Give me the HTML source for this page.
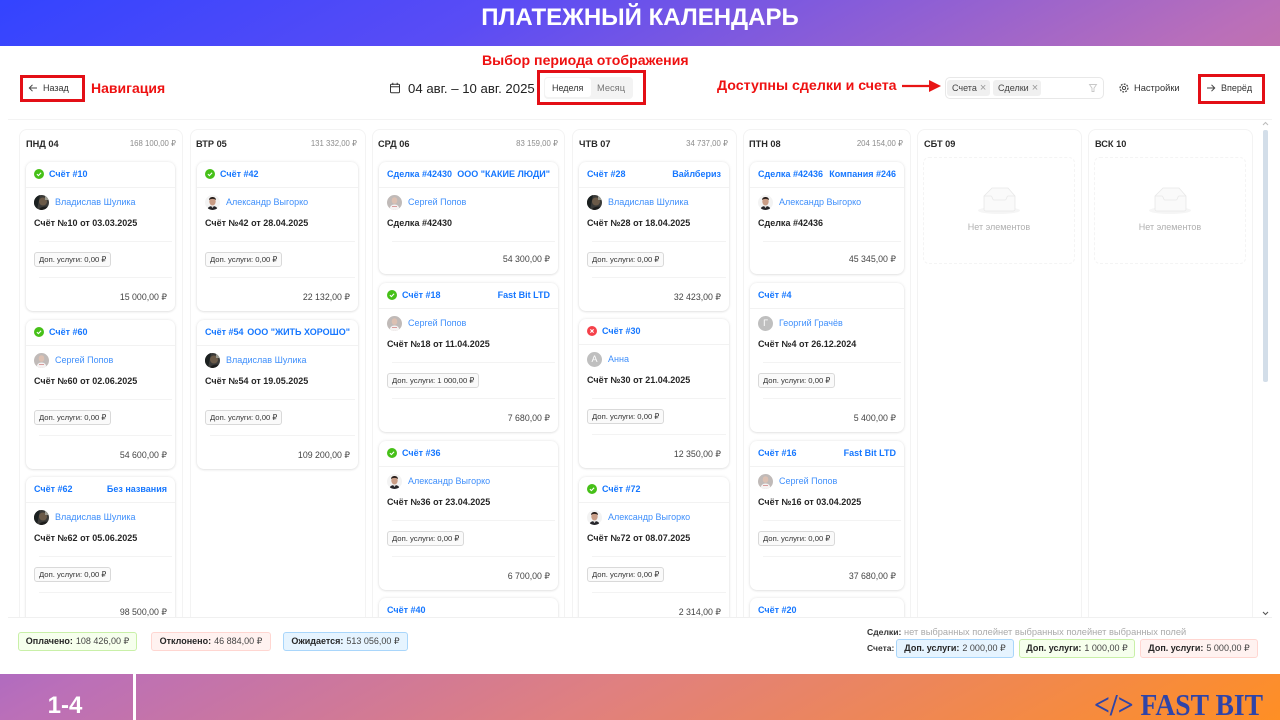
<!DOCTYPE html>
<html lang="ru"><head><meta charset="utf-8"><title>Платежный календарь</title>
<style>
*{box-sizing:border-box}
html{margin:0;padding:0;width:1280px;height:720px;overflow:hidden;background:#fff}
body{margin:0;padding:0;width:1280px;height:720px;position:relative;overflow:hidden;font-family:"Liberation Sans","DejaVu Sans",sans-serif}
.bg{position:absolute;left:0;top:0;width:1280px;height:720px;background:linear-gradient(to bottom right,#3344ff 0%,#5a4cf5 20%,#ba6fb9 50%,#e0807f 72%,#ff8f24 100%)}
.abs,.main,.col,.card,.card>*{position:absolute}
.title{position:absolute;left:0;top:0;width:1280px;height:46px;line-height:36px;text-align:center;color:#fff;font-weight:bold;font-size:24px}
.main{left:0;top:46px;width:1280px;height:628px;background:#fff}
.board{position:absolute;left:0;top:0;width:1280px;height:617px;overflow:hidden}
.red{position:absolute;color:#ee1111;font-weight:bold;white-space:nowrap}
.rbox{position:absolute;border:3px solid #e30f16}
.t{position:absolute;white-space:nowrap;color:#333;font-size:9.5px}
.col{top:129px;height:520px;border:1px solid #f3f3f3;border-radius:8px}
.dh{position:absolute;top:138px;font-size:9.2px;font-weight:bold;color:#2a2a2a;white-space:nowrap;line-height:11px;padding-top:1px}
.ds{position:absolute;top:138px;font-size:7.8px;color:#8c8c8c;white-space:nowrap;line-height:11px;text-align:right}
.card{background:#fff;border-radius:7px;box-shadow:0 0 3px rgba(0,0,0,.1),0 1px 2px rgba(0,0,0,.07);height:149px}
.card.s{height:112px}
.h{left:8px;right:8px;top:6px;height:13px;line-height:13px;font-size:9px;color:#1677ff;font-weight:bold;white-space:nowrap}
.h b{position:absolute;right:0;top:0}
.h svg{position:absolute;left:0;top:1px}
.h .o{margin-left:15px}
.ln{left:0;right:0;top:24.5px;height:1px;background:#f2f2f2}
.av{left:8px;top:33px;width:15px;height:15px;border-radius:50%;overflow:hidden}
.nm{left:29px;top:34px;line-height:13px;font-size:9px;color:#3f8ffb;white-space:nowrap}
.tt{left:8px;top:55px;line-height:13px;font-size:9px;font-weight:bold;color:#262626;white-space:nowrap}
.d1{left:13px;right:3px;top:79px;height:1px;background:#f3f3f3}
.d2{left:13px;right:3px;top:115px;height:1px;background:#f3f3f3}
.tag{left:8px;top:90px;height:15px;line-height:13px;border:1px solid #d9d9d9;border-radius:3px;background:#fafafa;padding:0 4px;font-size:7.7px;color:#333;white-space:nowrap}
.sum{right:8px;top:129px;line-height:13px;font-size:8.8px;color:#444;white-space:nowrap}
.s .sum{top:91px}
.empty{position:absolute;top:157px;width:152px;height:107px;border:1px dashed #f4f4f4;border-radius:6px}
.empty svg{position:absolute;left:54px;top:29px}
.empty span{position:absolute;left:0;right:0;top:64px;text-align:center;font-size:9px;color:#b0b0b0}
.foot{position:absolute;left:8px;top:617px;width:1264px;height:57px;background:#fff;border-top:1px solid #f0f0f0}
.pill{position:absolute;height:19px;line-height:17px;border-radius:3px;border:1px solid;font-size:9px;color:#444;white-space:nowrap;text-align:center}
.pill b{color:#262626;margin-right:3px}
.g{background:#f6ffed;border-color:#c9f0a8}.r{background:#fff2f0;border-color:#ffd6d1}.bl{background:#e6f4ff;border-color:#a9d6fb}
.chip{position:absolute;top:80px;height:16px;line-height:16px;background:#f0f0f0;border-radius:3px;font-size:9px;color:#444;padding-left:5px;white-space:nowrap}
.chip i{font-style:normal;color:#999;margin-left:3px;font-size:11px;line-height:14px}
</style></head>
<body>
<div class="bg"></div>
<svg width="0" height="0" style="position:absolute">
<defs>
<symbol id="ok" viewBox="0 0 10 10"><circle cx="5" cy="5" r="5" fill="#46c018"/><path d="M2.9 5.1 4.4 6.6 7.1 3.7" fill="none" stroke="#fff" stroke-width="1.1"/></symbol>
<symbol id="no" viewBox="0 0 10 10"><circle cx="5" cy="5" r="5" fill="#f5414a"/><path d="M3.4 3.4 6.6 6.6M6.6 3.4 3.4 6.6" fill="none" stroke="#fff" stroke-width="1.1"/></symbol>
<symbol id="vl" viewBox="0 0 15 15"><rect width="15" height="15" fill="#3a3a38"/><circle cx="9" cy="6.5" r="4" fill="#6b5a48"/><path d="M0 0h6L3 15H0z" fill="#1b2020"/><path d="M5 15c0-3 6-4 10-3v3z" fill="#1d1d1c"/><rect x="11" y="0" width="4" height="5" fill="#9a9a90"/></symbol>
<symbol id="al" viewBox="0 0 15 15"><rect width="15" height="15" fill="#f3f3f3"/><ellipse cx="7.5" cy="6.5" rx="3.2" ry="4" fill="#c99d86"/><path d="M4 5c0-4 7-4 7 0-2-1.500-5-1.500-7 0z" fill="#2a1f1b"/><path d="M2.500 15c0-3 2.500-4 5-4s5 1 5 4z" fill="#26262a"/><path d="M6 11l1.500 2 1.500-2z" fill="#ddd"/></symbol>
<symbol id="sp" viewBox="0 0 15 15"><rect width="15" height="15" fill="#c0bab8"/><ellipse cx="7.500" cy="5.500" rx="2.800" ry="3.300" fill="#dcc0b2"/><path d="M2.500 15c0-4 2.500-5.500 5-5.500s5 1.500 5 5.500z" fill="#f5f2f2"/><path d="M5 11h5v.8H5z" fill="#cf8080"/></symbol>
<symbol id="box" viewBox="0 0 42 28"><ellipse cx="21" cy="23.500" rx="21" ry="3.500" fill="#f5f5f5"/><path d="M6 9 14 1H30L37 9V22a2 2 0 0 1-2 2H8a2 2 0 0 1-2-2z" fill="#fafafa" stroke="#e8e8e8" stroke-width=".8"/><path d="M6 9H13c1.500 0 1 4 3 4h11c2 0 1.500-4 3-4H37" fill="none" stroke="#e8e8e8" stroke-width=".8"/></symbol>
</defs></svg>

<div class="title">ПЛАТЕЖНЫЙ КАЛЕНДАРЬ</div>
<div class="main"></div>

<!-- toolbar -->
<div class="rbox" style="left:20px;top:75px;width:65px;height:27px"></div>
<svg style="position:absolute;left:28px;top:83px" width="10" height="10" viewBox="0 0 10 10"><path d="M9 5H1.500M4.500 1.800 1.300 5 4.500 8.200" fill="none" stroke="#444" stroke-width="1"/></svg>
<div class="t" style="left:43px;top:83px;line-height:11px;font-size:9px">Назад</div>
<div class="red" style="left:91px;top:80px;font-size:14px;line-height:16px">Навигация</div>

<svg style="position:absolute;left:389px;top:82px" width="12" height="12" viewBox="0 0 12 12"><rect x="1.500" y="2.200" width="9" height="8.600" rx="1" fill="none" stroke="#333" stroke-width="1"/><path d="M1.500 4.800H10.500M3.800 .8V3M8.200 .8V3" fill="none" stroke="#333" stroke-width="1"/></svg>
<div class="t" style="left:408px;top:81px;font-size:13.2px;line-height:15px;color:#222">04 авг. – 10 авг. 2025</div>
<div class="rbox" style="left:537px;top:70px;width:109px;height:35px"></div>
<div style="position:absolute;left:544px;top:77px;width:89px;height:22px;background:#f3f3f3;border-radius:4px"></div>
<div style="position:absolute;left:545px;top:78px;width:46px;height:19px;background:#fff;border-radius:3px"></div>
<div class="t" style="left:552px;top:83px;font-size:9px;line-height:11px">Неделя</div>
<div class="t" style="left:597px;top:83px;font-size:9.3px;line-height:11px;color:#777">Месяц</div>
<div class="red" style="left:482px;top:52px;font-size:14.1px;line-height:16px">Выбор периода отображения</div>

<div class="red" style="left:717px;top:78px;font-size:14.2px;line-height:16px">Доступны сделки и счета</div>
<svg style="position:absolute;left:900px;top:78px" width="46" height="16" viewBox="0 0 46 16"><path d="M2 8H32" stroke="#e81515" stroke-width="2.200"/><path d="M29 2 41 8 29 14z" fill="#e81515"/></svg>
<div style="position:absolute;left:945px;top:77px;width:159px;height:22px;border:1px solid #e8e8e8;border-radius:5px;background:#fff"></div>
<div class="chip" style="left:947px;width:43px">Счета<i>×</i></div>
<div class="chip" style="left:993px;width:48px">Сделки<i>×</i></div>
<svg style="position:absolute;left:1088px;top:83px" width="10" height="10" viewBox="0 0 10 10"><path d="M1.500 1.500H8.500L6 5.200V8.500H4V5.200z" fill="none" stroke="#c8c8c8" stroke-width=".9"/></svg>
<svg style="position:absolute;left:1119px;top:83px" width="10" height="10" viewBox="0 0 10 10"><circle cx="5" cy="5" r="1.600" fill="none" stroke="#444" stroke-width=".9"/><circle cx="5" cy="5" r="3.900" fill="none" stroke="#444" stroke-width="1.300" stroke-dasharray="1.800 1.200"/></svg>
<div class="t" style="left:1134px;top:83px;font-size:9.3px;line-height:11px">Настройки</div>
<div class="rbox" style="left:1198px;top:74px;width:67px;height:30px"></div>
<svg style="position:absolute;left:1206px;top:83px" width="10" height="10" viewBox="0 0 10 10"><path d="M1 5H8.500M5.500 1.800 8.700 5 5.500 8.200" fill="none" stroke="#444" stroke-width="1"/></svg>
<div class="t" style="left:1221px;top:83px;font-size:9px;line-height:11px">Вперёд</div>
<div style="position:absolute;left:8px;top:119px;width:1264px;height:1px;background:#f3f3f3"></div>

<div class="board">
<!-- columns -->
<div class="col" style="left:19px;width:164px"></div>
<div class="col" style="left:190px;width:176px"></div>
<div class="col" style="left:372px;width:193px"></div>
<div class="col" style="left:572px;width:165px"></div>
<div class="col" style="left:743px;width:168px"></div>
<div class="col" style="left:917px;width:165px"></div>
<div class="col" style="left:1088px;width:165px"></div>

<div class="dh" style="left:26px">ПНД 04</div><div class="ds" style="right:1104px">168 100,00 ₽</div>
<div class="dh" style="left:196px">ВТР 05</div><div class="ds" style="right:923px">131 332,00 ₽</div>
<div class="dh" style="left:378px">СРД 06</div><div class="ds" style="right:722px">83 159,00 ₽</div>
<div class="dh" style="left:579px">ЧТВ 07</div><div class="ds" style="right:552px">34 737,00 ₽</div>
<div class="dh" style="left:749px">ПТН 08</div><div class="ds" style="right:377px">204 154,00 ₽</div>
<div class="dh" style="left:924px">СБТ 09</div>
<div class="dh" style="left:1095px">ВСК 10</div>

<div class="empty" style="left:923px"><svg width="42" height="28"><use href="#box"/></svg><span>Нет элементов</span></div>
<div class="empty" style="left:1094px"><svg width="42" height="28"><use href="#box"/></svg><span>Нет элементов</span></div>

<!-- col 1 -->
<div class="card" style="left:26px;top:162px;width:149px"><div class="h"><svg width="10" height="10"><use href="#ok"/></svg><span class="o">Счёт #10</span></div><div class="ln"></div><svg class="av" viewBox="0 0 15 15"><use href="#vl"/></svg><div class="nm">Владислав Шулика</div><div class="tt">Счёт №10 от 03.03.2025</div><div class="d1"></div><div class="tag">Доп. услуги: 0,00 ₽</div><div class="d2"></div><div class="sum">15 000,00 ₽</div></div>
<div class="card" style="left:26px;top:320px;width:149px"><div class="h"><svg width="10" height="10"><use href="#ok"/></svg><span class="o">Счёт #60</span></div><div class="ln"></div><svg class="av" viewBox="0 0 15 15"><use href="#sp"/></svg><div class="nm">Сергей Попов</div><div class="tt">Счёт №60 от 02.06.2025</div><div class="d1"></div><div class="tag">Доп. услуги: 0,00 ₽</div><div class="d2"></div><div class="sum">54 600,00 ₽</div></div>
<div class="card" style="left:26px;top:477px;width:149px"><div class="h">Счёт #62<b>Без названия</b></div><div class="ln"></div><svg class="av" viewBox="0 0 15 15"><use href="#vl"/></svg><div class="nm">Владислав Шулика</div><div class="tt">Счёт №62 от 05.06.2025</div><div class="d1"></div><div class="tag">Доп. услуги: 0,00 ₽</div><div class="d2"></div><div class="sum">98 500,00 ₽</div></div>

<!-- col 2 -->
<div class="card" style="left:197px;top:162px;width:161px"><div class="h"><svg width="10" height="10"><use href="#ok"/></svg><span class="o">Счёт #42</span></div><div class="ln"></div><svg class="av" viewBox="0 0 15 15"><use href="#al"/></svg><div class="nm">Александр Выгорко</div><div class="tt">Счёт №42 от 28.04.2025</div><div class="d1"></div><div class="tag">Доп. услуги: 0,00 ₽</div><div class="d2"></div><div class="sum">22 132,00 ₽</div></div>
<div class="card" style="left:197px;top:320px;width:161px"><div class="h">Счёт #54<b>ООО "ЖИТЬ ХОРОШО"</b></div><div class="ln"></div><svg class="av" viewBox="0 0 15 15"><use href="#vl"/></svg><div class="nm">Владислав Шулика</div><div class="tt">Счёт №54 от 19.05.2025</div><div class="d1"></div><div class="tag">Доп. услуги: 0,00 ₽</div><div class="d2"></div><div class="sum">109 200,00 ₽</div></div>

<!-- col 3 -->
<div class="card s" style="left:379px;top:162px;width:179px"><div class="h">Сделка #42430<b>ООО "КАКИЕ ЛЮДИ"</b></div><div class="ln"></div><svg class="av" viewBox="0 0 15 15"><use href="#sp"/></svg><div class="nm">Сергей Попов</div><div class="tt">Сделка #42430</div><div class="d1"></div><div class="sum">54 300,00 ₽</div></div>
<div class="card" style="left:379px;top:283px;width:179px"><div class="h"><svg width="10" height="10"><use href="#ok"/></svg><span class="o">Счёт #18</span><b>Fast Bit LTD</b></div><div class="ln"></div><svg class="av" viewBox="0 0 15 15"><use href="#sp"/></svg><div class="nm">Сергей Попов</div><div class="tt">Счёт №18 от 11.04.2025</div><div class="d1"></div><div class="tag">Доп. услуги: 1 000,00 ₽</div><div class="d2"></div><div class="sum">7 680,00 ₽</div></div>
<div class="card" style="left:379px;top:441px;width:179px"><div class="h"><svg width="10" height="10"><use href="#ok"/></svg><span class="o">Счёт #36</span></div><div class="ln"></div><svg class="av" viewBox="0 0 15 15"><use href="#al"/></svg><div class="nm">Александр Выгорко</div><div class="tt">Счёт №36 от 23.04.2025</div><div class="d1"></div><div class="tag">Доп. услуги: 0,00 ₽</div><div class="d2"></div><div class="sum">6 700,00 ₽</div></div>
<div class="card" style="left:379px;top:598px;width:179px"><div class="h">Счёт #40</div><div class="ln"></div></div>

<!-- col 4 -->
<div class="card" style="left:579px;top:162px;width:150px"><div class="h">Счёт #28<b>Вайлбериз</b></div><div class="ln"></div><svg class="av" viewBox="0 0 15 15"><use href="#vl"/></svg><div class="nm">Владислав Шулика</div><div class="tt">Счёт №28 от 18.04.2025</div><div class="d1"></div><div class="tag">Доп. услуги: 0,00 ₽</div><div class="d2"></div><div class="sum">32 423,00 ₽</div></div>
<div class="card" style="left:579px;top:319px;width:150px"><div class="h"><svg width="10" height="10"><use href="#no"/></svg><span class="o">Счёт #30</span></div><div class="ln"></div><div class="av" style="background:#bfbfbf;color:#fff;font-size:9px;line-height:15px;text-align:center">А</div><div class="nm">Анна</div><div class="tt">Счёт №30 от 21.04.2025</div><div class="d1"></div><div class="tag">Доп. услуги: 0,00 ₽</div><div class="d2"></div><div class="sum">12 350,00 ₽</div></div>
<div class="card" style="left:579px;top:477px;width:150px"><div class="h"><svg width="10" height="10"><use href="#ok"/></svg><span class="o">Счёт #72</span></div><div class="ln"></div><svg class="av" viewBox="0 0 15 15"><use href="#al"/></svg><div class="nm">Александр Выгорко</div><div class="tt">Счёт №72 от 08.07.2025</div><div class="d1"></div><div class="tag">Доп. услуги: 0,00 ₽</div><div class="d2"></div><div class="sum">2 314,00 ₽</div></div>

<!-- col 5 -->
<div class="card s" style="left:750px;top:162px;width:154px"><div class="h">Сделка #42436<b>Компания #246</b></div><div class="ln"></div><svg class="av" viewBox="0 0 15 15"><use href="#al"/></svg><div class="nm">Александр Выгорко</div><div class="tt">Сделка #42436</div><div class="d1"></div><div class="sum">45 345,00 ₽</div></div>
<div class="card" style="left:750px;top:283px;width:154px"><div class="h">Счёт #4</div><div class="ln"></div><div class="av" style="background:#bfbfbf;color:#fff;font-size:9px;line-height:15px;text-align:center">Г</div><div class="nm">Георгий Грачёв</div><div class="tt">Счёт №4 от 26.12.2024</div><div class="d1"></div><div class="tag">Доп. услуги: 0,00 ₽</div><div class="d2"></div><div class="sum">5 400,00 ₽</div></div>
<div class="card" style="left:750px;top:441px;width:154px"><div class="h">Счёт #16<b>Fast Bit LTD</b></div><div class="ln"></div><svg class="av" viewBox="0 0 15 15"><use href="#sp"/></svg><div class="nm">Сергей Попов</div><div class="tt">Счёт №16 от 03.04.2025</div><div class="d1"></div><div class="tag">Доп. услуги: 0,00 ₽</div><div class="d2"></div><div class="sum">37 680,00 ₽</div></div>
<div class="card" style="left:750px;top:598px;width:154px"><div class="h">Счёт #20</div><div class="ln"></div></div>
</div>

<!-- scrollbar -->
<div style="position:absolute;left:1263px;top:130px;width:5px;height:252px;background:#d3dee9;border-radius:2px"></div>
<svg style="position:absolute;left:1262px;top:121px" width="7" height="6" viewBox="0 0 7 6"><path d="M1 4 3.500 1.500 6 4" fill="none" stroke="#bbb" stroke-width="1"/></svg>
<svg style="position:absolute;left:1262px;top:610px" width="7" height="6" viewBox="0 0 7 6"><path d="M1 2 3.500 4.500 6 2" fill="none" stroke="#555" stroke-width="1.100"/></svg>

<!-- footer -->
<div class="foot"></div>
<div class="pill g" style="left:18px;top:632px;width:119px"><b>Оплачено:</b>108 426,00 ₽</div>
<div class="pill r" style="left:151px;top:632px;width:120px"><b>Отклонено:</b>46 884,00 ₽</div>
<div class="pill bl" style="left:283px;top:632px;width:125px"><b>Ожидается:</b>513 056,00 ₽</div>
<div class="t" style="left:867px;top:627px;font-size:9.3px;line-height:11px;color:#aaa"><b style="color:#333;font-size:8.6px">Сделки:</b> нет выбранных полейнет выбранных полейнет выбранных полей</div>
<div class="t" style="left:867px;top:643px;font-size:8.5px;line-height:11px;font-weight:bold">Счета:</div>
<div class="pill bl" style="left:896px;top:639px;width:118px"><b>Доп. услуги:</b>2 000,00 ₽</div>
<div class="pill g" style="left:1019px;top:639px;width:116px"><b>Доп. услуги:</b>1 000,00 ₽</div>
<div class="pill r" style="left:1140px;top:639px;width:118px"><b>Доп. услуги:</b>5 000,00 ₽</div>

<!-- bottom band -->
<div style="position:absolute;left:133px;top:674px;width:3px;height:46px;background:#fff"></div>
<div style="position:absolute;left:0;top:694px;width:130px;text-align:center;color:#fff;font-weight:bold;font-size:24px;line-height:24px">1-4</div>
<div style="position:absolute;right:17px;top:690px;color:#2f44a8;font-family:'Liberation Serif',serif;font-weight:bold;font-size:27.6px;line-height:30px;white-space:nowrap;transform:scaleY(1.1);transform-origin:center"><span style="font-size:28px">&lt;/&gt;</span> FAST BIT</div>
</body></html>
